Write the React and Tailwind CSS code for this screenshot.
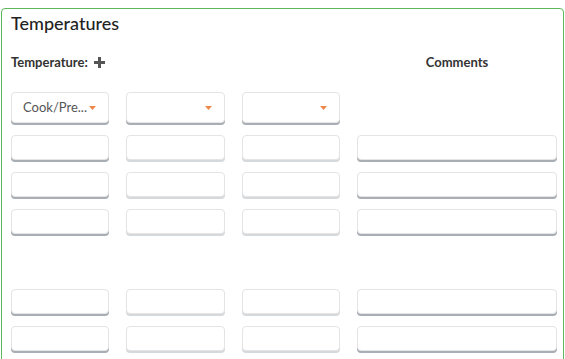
import React from "react";

const font = { fontFamily: "Lato, 'Open Sans', sans-serif" };

function Caret() {
  return (
    <svg width="7" height="4" viewBox="0 0 7 4" className="shrink-0">
      <path d="M0 0 L7 0 L3.5 4 Z" fill="#f0874a" />
    </svg>
  );
}

function Select({ text, w }) {
  return (
    <div className={w + " h-[31px] shrink-0 bg-white border border-[#e4e4e4] rounded-[4px] shadow-[0_2px_0_#a8aeb4] flex items-center justify-end pr-[12px] gap-[2px]"}>
      {text ? (
        <span className="text-[13px] text-[#555] leading-none">{text}</span>
      ) : null}
      <Caret />
    </div>
  );
}

function Input({ w, dark }) {
  return (
    <div
      className={
        w +
        " h-[25px] shrink-0 bg-white border border-[#e4e4e4] rounded-[4px] " +
        (dark ? "shadow-[0_2px_0_#a8aeb4]" : "shadow-[0_2px_0_#d6d9dc]")
      }
    />
  );
}

function Row({ className = "" }) {
  return (
    <div className={"flex gap-[17px] " + className}>
      <Input w="w-[98px]" dark />
      <Input w="w-[99px]" />
      <Input w="w-[98px]" />
      <Input w="w-[200px]" dark />
    </div>
  );
}

export default function App() {
  return (
    <div className="w-[565px] h-[359px] overflow-hidden bg-white" style={font}>
      <div className="ml-[1px] mt-[8px] w-[563px] h-[400px] border border-[#5cb85c] rounded-[4px] pl-[9px] pt-[2px]">
        <div className="h-[24px] leading-[24px] text-[18px] font-medium text-[#222]">Temperatures</div>
        <div className="mt-[19px] h-[16px] flex items-center text-[13px] leading-[16px] font-bold text-[#333]">
          <div className="w-[346px] flex items-center">
            <span>Temperature:</span>
            <svg width="11" height="11" viewBox="0 0 11 11" className="ml-[6px]">
              <rect x="4" y="0" width="3" height="11" fill="#555" />
              <rect x="0" y="4" width="11" height="3" fill="#555" />
            </svg>
          </div>
          <div className="w-[200px] text-center">Comments</div>
        </div>
        <div className="mt-[22px] flex gap-[17px]">
          <Select w="w-[98px]" text="Cook/Pre..." />
          <Select w="w-[99px]" />
          <Select w="w-[98px]" />
        </div>
        <Row className="mt-[12px]" />
        <Row className="mt-[12px]" />
        <Row className="mt-[12px]" />
        <Row className="mt-[55px]" />
        <Row className="mt-[12px]" />
      </div>
    </div>
  );
}
